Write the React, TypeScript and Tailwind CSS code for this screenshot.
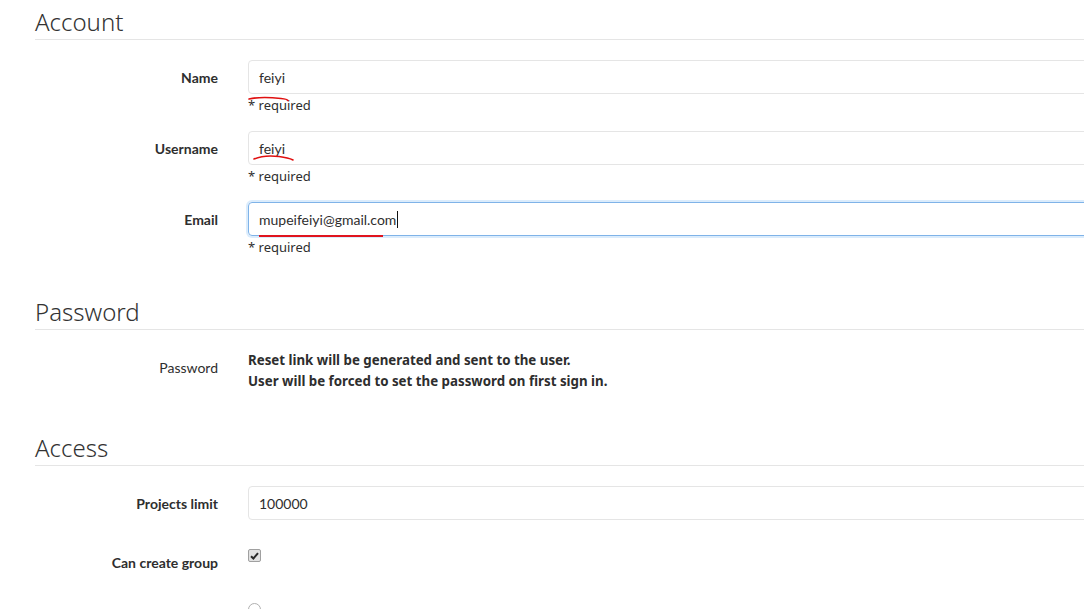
import type { ReactNode } from "react";

function SectionTitle({ children, className = "" }: { children: ReactNode; className?: string }) {
  return (
    <h3
      className={`h-[40px] border-b border-[#e5e5e5] pt-[6px] font-['Noto_Sans',sans-serif] text-[24px] font-light leading-[32px] text-[#333] ${className}`}
    >
      {children}
    </h3>
  );
}

function Row({
  label,
  bold = true,
  labelClass = "leading-[34px]",
  className = "",
  children,
}: {
  label: string;
  bold?: boolean;
  labelClass?: string;
  className?: string;
  children: ReactNode;
}) {
  return (
    <div className={`flex items-start ${className}`}>
      <label
        className={`w-[183px] shrink-0 text-right text-[14px] text-[#2e2e2e] ${bold ? "font-bold" : "font-normal"} ${labelClass}`}
      >
        {label}
      </label>
      <div className="relative ml-[30px] flex-1">{children}</div>
    </div>
  );
}

function TextBox({ value, focused = false }: { value: string; focused?: boolean }) {
  return (
    <div
      className={`flex h-[34px] items-center rounded-[4px] border px-[10px] text-[14px] text-[#2e2e2e] ${
        focused
          ? "border-[#7fb3e8] shadow-[0_0_0_2px_rgba(190,220,250,0.55)]"
          : "border-[#e5e5e5]"
      }`}
    >
      <span>{value}</span>
      {focused ? <span className="ml-[1px] h-[17px] w-px bg-[#111]" /> : null}
    </div>
  );
}

function Required() {
  return (
    <p className="mt-[2px] font-['Noto_Sans',sans-serif] text-[13px] leading-[18px] text-[#2e2e2e]">
      * required
    </p>
  );
}

export default function App() {
  return (
    <div className="h-[609px] w-[1084px] overflow-hidden bg-white font-['Lato',sans-serif]">
      <div className="w-[1220px] pl-[35px]">
        <SectionTitle>Account</SectionTitle>

        <Row label="Name" className="mt-[20px]" labelClass="pt-px leading-[34px]">
          <TextBox value="feiyi" />
          <Required />
          <svg className="absolute left-0 top-[36px]" width="44" height="8" viewBox="0 0 44 8">
            <path d="M1 3 C 10 1, 24 1.5, 33 2.5 S 38 4, 40 4.5" fill="none" stroke="#e01010" strokeWidth="1.6" strokeLinecap="round" />
          </svg>
        </Row>

        <Row label="Username" className="mt-[17px]" labelClass="pt-px leading-[34px]">
          <TextBox value="feiyi" />
          <Required />
          <svg className="absolute left-[5px] top-[23px]" width="44" height="10" viewBox="0 0 44 10">
            <path d="M1 5 C 8 2, 18 1.5, 26 2.5 S 36 4, 40 6" fill="none" stroke="#e01010" strokeWidth="1.6" strokeLinecap="round" />
          </svg>
        </Row>

        <Row label="Email" className="mt-[17px]" labelClass="pt-px leading-[34px]">
          <TextBox value="mupeifeiyi@gmail.com" focused />
          <Required />
          <div className="absolute left-[11px] top-[33px] h-[2px] w-[124px] bg-[#e0141e]" />
        </Row>

        <SectionTitle className="mt-[34px]">Password</SectionTitle>

        <Row label="Password" bold={false} labelClass="pt-[8px] leading-[20px]" className="mt-[20px]">
          <div className="font-['Noto_Sans',sans-serif] text-[13.3px] font-bold leading-[21px] text-[#2e2e2e]">
            <p>Reset link will be generated and sent to the user.</p>
            <p>User will be forced to set the password on first sign in.</p>
          </div>
        </Row>

        <SectionTitle className="mt-[34px]">Access</SectionTitle>

        <Row label="Projects limit" className="mt-[20px]" labelClass="pt-px leading-[34px]">
          <TextBox value="100000" />
        </Row>

        <Row label="Can create group" labelClass="pt-[11px] leading-[20px]" className="mt-[21px]">
          <span className="mt-[7px] flex h-[13px] w-[13px] items-center justify-center rounded-[2px] border border-[#a0a0a0] bg-[#e2e2e2]">
            <svg width="9" height="8" viewBox="0 0 9 8">
              <path d="M1 4.2 L3.4 6.5 L8 1.2" fill="none" stroke="#2a2a2a" strokeWidth="2" />
            </svg>
          </span>
        </Row>

        <Row label="" labelClass="leading-[20px]" className="mt-[30px]">
          <span className="block h-[13px] w-[13px] rounded-full border border-[#b0b0b0] bg-white" />
        </Row>
      </div>
    </div>
  );
}
